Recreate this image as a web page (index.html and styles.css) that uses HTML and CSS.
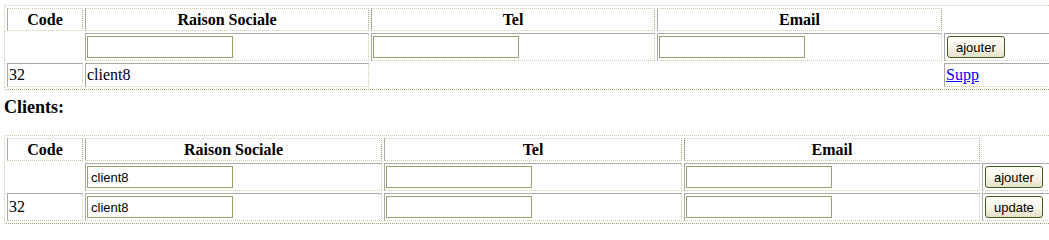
FILE: index.html
```html
<!DOCTYPE html>
<html>
<head>
<meta charset="utf-8">
<link rel="stylesheet" href="styles.css">
</head>
<body>
<table class="grid grid-a">
  <tr class="row-head">
    <th class="c1">Code</th>
    <th class="c2">Raison Sociale</th>
    <th class="c3">Tel</th>
    <th class="c4">Email</th>
    <th class="c5"></th>
  </tr>
  <tr class="row-input">
    <td></td>
    <td><input class="field" type="text"></td>
    <td><input class="field" type="text"></td>
    <td><input class="field" type="text"></td>
    <td><button class="btn">ajouter</button></td>
  </tr>
  <tr class="row-data">
    <td>32</td>
    <td>client8</td>
    <td></td>
    <td></td>
    <td><a href="#" class="link">Supp</a></td>
  </tr>
</table>

<h3 class="title">Clients:</h3>

<table class="grid grid-b">
  <tr class="row-head">
    <th class="c1">Code</th>
    <th class="c2">Raison Sociale</th>
    <th class="c3">Tel</th>
    <th class="c4">Email</th>
    <th class="c5"></th>
  </tr>
  <tr class="row-input">
    <td></td>
    <td><input class="field" type="text" value="client8"></td>
    <td><input class="field" type="text"></td>
    <td><input class="field" type="text"></td>
    <td><button class="btn">ajouter</button></td>
  </tr>
  <tr class="row-input">
    <td>32</td>
    <td><input class="field" type="text" value="client8"></td>
    <td><input class="field" type="text"></td>
    <td><input class="field" type="text"></td>
    <td><button class="btn">update</button></td>
  </tr>
</table>
</body>
</html>
```
FILE: styles.css
```css
html {
  overflow: hidden;
  background: #ffffff;
}
body {
  margin: 0;
  padding: 5px 0 0 4px;
  font-family: "Liberation Serif", "Times New Roman", serif;
  font-size: 16px;
  color: #000;
}
.grid {
  border-collapse: separate;
  border-spacing: 2px;
  table-layout: fixed;
  empty-cells: hide;
  border-top: 1px dotted #cdc7a4;
  border-left: 1px dotted #cdc7a4;
  border-right: 1px dotted #9c9c74;
  border-bottom: 1px dotted #9c9c74;
}
.grid-a { width: 1063px; }
.grid-b { width: 1061px; }
.grid-a .c1 { width: 76px; }
.grid-a .c2 { width: 284px; }
.grid-a .c3 { width: 284px; }
.grid-a .c4 { width: 285px; }
.grid-a .c5 { width: 120px; }
.grid-b .c1 { width: 76px; }
.grid-b .c2 { width: 297px; }
.grid-b .c3 { width: 298px; }
.grid-b .c4 { width: 296px; }
.grid-b .c5 { width: 80px; }

.grid th,
.grid td {
  box-sizing: border-box;
  padding: 1px;
  border-top: 1px solid #a9a9a9;
  border-left: 1px solid #a9a9a9;
  border-right: 1px dotted #cfc8a6;
  border-bottom: 1px dotted #cfc8a6;
  vertical-align: middle;
  white-space: nowrap;
  overflow: hidden;
}
.grid th {
  font-weight: bold;
  text-align: center;
  border-top: 1px dotted #cfc8a6;
  border-right: 1px dotted #a3a37c;
}
.grid td { text-align: left; }

.row-head { height: 23px; }
.row-input { height: 28px; }
.row-data { height: 24px; }

.field {
  box-sizing: border-box;
  width: 146px;
  height: 22px;
  margin: 0;
  padding: 1px 3px;
  border: 1px solid #97a26c;
  background: #fff;
  font-family: "Liberation Sans", Arial, sans-serif;
  font-size: 13px;
  color: #000;
  vertical-align: middle;
}
.btn {
  box-sizing: border-box;
  height: 22px;
  margin: 0 0 0 1px;
  padding: 0 8px;
  border: 1px solid #3f5a1d;
  border-radius: 3px;
  background: linear-gradient(#fffffb, #f4f1e2 60%, #e6e1c8);
  font-family: "Liberation Sans", Arial, sans-serif;
  font-size: 13px;
  color: #000;
  vertical-align: middle;
}
.link {
  color: #0000ff;
  text-decoration: underline;
}
.title {
  margin: 7px 0 17px 0;
  font-size: 18px;
  line-height: 21px;
  font-weight: bold;
}
```
